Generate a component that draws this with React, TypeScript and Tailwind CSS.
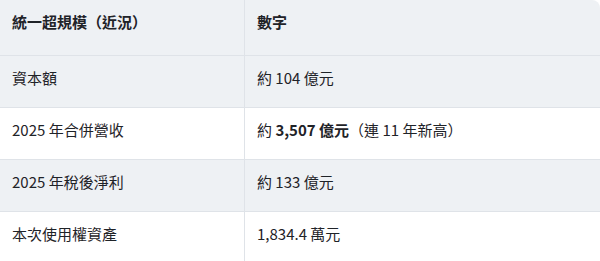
const rows: { label: string; value: React.ReactNode }[] = [
  { label: '資本額', value: '約 104 億元' },
  {
    label: '2025 年合併營收',
    value: (
      <>
        約 <strong className="font-bold">3,507 億元</strong>（連 11 年新高）
      </>
    ),
  },
  { label: '2025 年稅後淨利', value: '約 133 億元' },
  { label: '本次使用權資產', value: '1,834.4 萬元' },
]

export default function App() {
  return (
    <div
      className="h-[261px] w-[600px] overflow-hidden bg-white text-[15px] leading-6 text-[#1f2328]"
      style={{ fontFamily: '"Noto Sans CJK TC", "Noto Sans", sans-serif' }}
    >
      <div className="overflow-hidden rounded-tr-lg">
        <div className="grid h-[56px] grid-cols-[245px_1fr] border-b border-[#dfe3e8] bg-[#eef1f4] font-bold">
          <div className="border-r border-[#dfe3e8] px-3 pt-[10px]">統一超規模（近況）</div>
          <div className="px-3 pt-[10px]">數字</div>
        </div>
        {rows.map((row, i) => (
          <div
            className={`grid h-[52px] grid-cols-[245px_1fr] border-b border-[#dfe3e8] ${
              i % 2 === 0 ? 'bg-[#eef1f4]' : 'bg-white'
            }`}
            key={row.label}
          >
            <div className="border-r border-[#dfe3e8] px-3 pt-[10px]">{row.label}</div>
            <div className="px-3 pt-[10px]">{row.value}</div>
          </div>
        ))}
      </div>
    </div>
  )
}
